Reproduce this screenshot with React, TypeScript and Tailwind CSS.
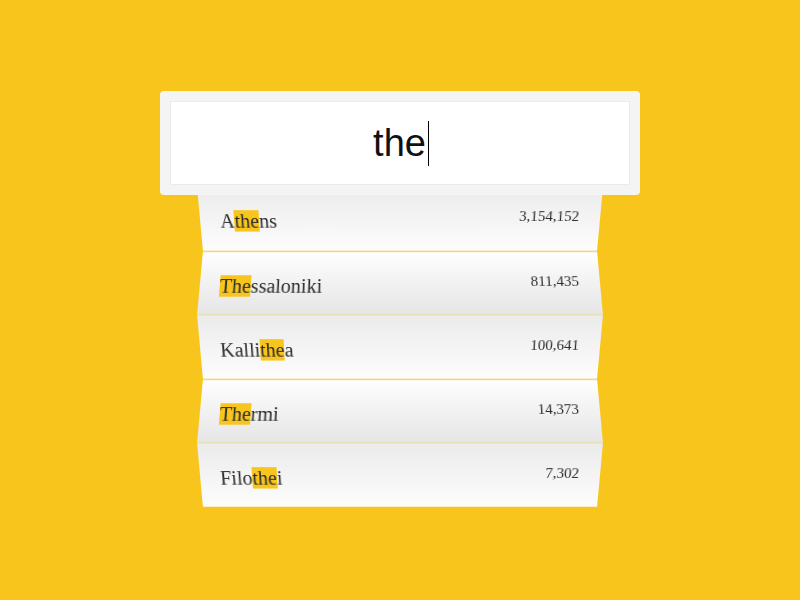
import React from "react";

type Row = { pre: string; hl: string; post: string; num: string };

const rows: Row[] = [
  { pre: "A", hl: "the", post: "ns", num: "3,154,152" },
  { pre: "", hl: "The", post: "ssaloniki", num: "811,435" },
  { pre: "Kalli", hl: "the", post: "a", num: "100,641" },
  { pre: "", hl: "The", post: "rmi", num: "14,373" },
  { pre: "Filo", hl: "the", post: "i", num: "7,302" },
];

export default function App() {
  return (
    <div className="w-[800px] h-[600px] bg-[#f8c51c] flex flex-col items-center pt-[91px] overflow-hidden">
      <div className="relative z-10 w-[480px] h-[104px] bg-[#f4f4f4] rounded-[4px] p-[10px]">
        <div className="w-full h-full bg-white border border-[#ebebeb] flex items-center justify-center">
          <span
            className="text-[38px] text-[#111] leading-none ml-[2px]"
            style={{ fontFamily: '"Liberation Sans", Arial, sans-serif' }}
          >
            the
          </span>
          <span className="inline-block w-px h-[45px] bg-black ml-[2px] mt-[1px]" />
        </div>
      </div>
      <div className="w-[400px] -mt-[9px] flex flex-col">
        {rows.map((r, i) => {
          const odd = i % 2 === 0;
          return (
            <div
              key={i}
              className={
                "h-[66px] shrink-0 flex items-center justify-between pl-[20px] pr-[21px] " +
                (i > 0 ? "-mt-[2px] border-t border-[#eadcaa] " : "") +
                (odd
                  ? "bg-linear-to-b from-[#ebebeb] to-[#fdfdfd] [transform:perspective(500px)_rotateX(-13deg)]"
                  : "bg-linear-to-b from-[#fefefe] to-[#e5e5e5] [transform:perspective(500px)_rotateX(13deg)]")
              }
              style={{ fontFamily: '"Liberation Serif", "Times New Roman", serif' }}
            >
              <span className="text-[20px] text-[#2b2b2b] leading-[22px] mt-[4px]">
                {r.pre}
                <span className="bg-[#f8c51c]">{r.hl}</span>
                {r.post}
              </span>
              <span className="text-[15px] text-[#2b2b2b] leading-none -mt-[5px]">{r.num}</span>
            </div>
          );
        })}
      </div>
    </div>
  );
}
